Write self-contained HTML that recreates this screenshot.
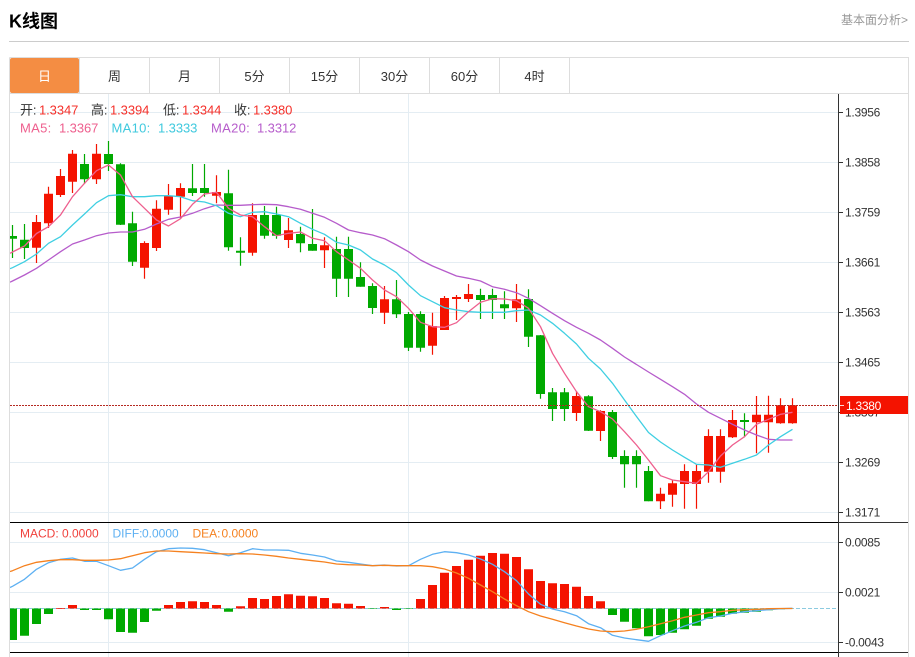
<!DOCTYPE html>
<html lang="zh">
<head>
<meta charset="utf-8">
<title>K线图</title>
<style>
html,body{margin:0;padding:0;background:#fff;width:915px;height:657px;overflow:hidden}
svg{display:block;position:absolute;left:0;top:0}
text{font-family:"Liberation Sans","Noto Sans CJK SC",sans-serif}
.ax{font-size:12px;fill:#333;letter-spacing:-.28px}
.lg{font-size:13px;letter-spacing:-.08px}
.md{font-size:12px}
.tab{font-size:13px;fill:#333;text-anchor:middle}
</style>
</head>
<body>
<svg width="915" height="657" viewBox="0 0 915 657" xmlns="http://www.w3.org/2000/svg">
<defs><clipPath id="c"><rect x="10" y="94" width="828" height="563"/></clipPath></defs>

<!-- header -->
<text x="9" y="27.5" font-size="18" font-weight="700" fill="#000">K线图</text>
<text x="908" y="24" font-size="12" fill="#999" text-anchor="end">基本面分析&gt;</text>
<path d="M9 41.5H909" stroke="#ccc" fill="none"/>

<!-- frame and tabs -->
<path d="M9.5 57.5H908.5V657M9.5 57.5V657M9 93.5H909M79.5 58V93M149.5 58V93M219.5 58V93M289.5 58V93M359.5 58V93M429.5 58V93M499.5 58V93M569.5 58V93" stroke="#ddd" fill="none"/>
<rect x="10" y="58" width="69" height="35" rx="2" fill="#f48d43"/>
<text class="tab" x="44.5" y="81" style="fill:#fff">日</text>
<text class="tab" x="114.5" y="81">周</text>
<text class="tab" x="184.5" y="81">月</text>
<text class="tab" x="254.5" y="81">5分</text>
<text class="tab" x="324.5" y="81">15分</text>
<text class="tab" x="394.5" y="81">30分</text>
<text class="tab" x="464.5" y="81">60分</text>
<text class="tab" x="534.5" y="81">4时</text>

<!-- grid -->
<path d="M10 112.5H838M10 162.5H838M10 212.5H838M10 262.5H838M10 312.5H838M10 362.5H838M10 412.5H838M10 462.5H838M10 512.5H838M10 542.5H838M10 592.5H838M10 642.5H838M108.5 94V657M408.5 94V657" stroke="#e4edf3" fill="none"/>

<g clip-path="url(#c)">
<!-- wicks -->
<path stroke="#f41300" stroke-width="1.2" fill="none" d="M36.5 215V263M48.5 186.7V228M60.5 169V197M72.5 150V193M96.5 144V184M144.5 241.3V278.7M156.5 200.3V251M168.5 184V214.7M180.5 183.3V218.3M216.5 175.3V203.3M252.5 203.3V255.7M288.5 218V248M324.5 237.3V268M384.5 286V324M432.5 312.7V354.7M444.5 296V330M456.5 295V320M468.5 284V302M516.5 284V322M576.5 391V421M600.5 410.3V441M660.5 487.7V509M672.5 480V506.7M684.5 464.3V508.7M696.5 464.3V508.7M708.5 429.3V482.7M720.5 429.3V482.7M732.5 410V438M756.5 396V453.3M768.5 395.7V452.7M780.5 398.3V423.7M792.5 398.3V423.7"/>
<path stroke="#00a900" stroke-width="1.2" fill="none" d="M12.5 225V258M24.5 224V259M84.5 154V184M108.5 141V171M120.5 163.3V225M132.5 211.7V266M192.5 164V196M204.5 164V196.7M228.5 169.7V250.7M240.5 237.3V265.7M264.5 206V238.7M276.5 206.7V238.7M300.5 226.7V252.3M312.5 209V250.7M336.5 236.7V297M348.5 236.7V297M360.5 262.3V286.7M372.5 283.3V314M396.5 280V318M408.5 312V351M420.5 311.3V351.7M480.5 288.7V319M492.5 288.7V319M504.5 291.3V319M528.5 289.3V347M540.5 335V398.7M552.5 388V421M564.5 388V421M588.5 395.3V431M612.5 410V459M624.5 450.3V487.7M636.5 450.3V487.7M648.5 466V501.3M744.5 413.3V437.3"/>
<!-- bodies -->
<path fill="#f41300" d="M32 222H41V247.7H32zM44 193.7H53V223.3H44zM56 176H65V195H56zM68 153.7H77V181.7H68zM92 153.7H101V179.3H92zM140 243H149V267.7H140zM152 208.7H161V248H152zM164 196H173V209.7H164zM176 188H185V196.7H176zM212 192H221V195.7H212zM248 215H257V252.7H248zM284 230.3H293V240H284zM320 245.3H329V250.3H320zM380 299.3H389V312.7H380zM428 326H437V345.7H428zM440 298H449V330H440zM452 297H461V299H452zM464 294H473V299H464zM512 299.3H521V308.3H512zM572 396H581V413H572zM596 411H605V431H596zM656 493.7H665V501.3H656zM668 483.3H677V494.7H668zM680 471H689V484H680zM692 471H701V484H692zM704 436H713V471.7H704zM716 436H725V471.7H716zM728 420H737V437.3H728zM752 414.7H761V422.3H752zM764 414.7H773V422.3H764zM776 405.3H785V423.3H776zM788 405.3H797V423.3H788z"/>
<path fill="#00a900" d="M10 236H17V238.7H10zM20 239.7H29V248H20zM80 164H89V179.3H80zM104 154H113V164H104zM116 164.3H125V224.7H116zM128 223.3H137V261.7H128zM188 188.3H197V193H188zM200 188H209V193H200zM224 193.3H233V247.3H224zM236 250.7H245V252.7H236zM260 215H269V235.7H260zM272 215H281V235.7H272zM296 234H305V243.3H296zM308 244H317V250.7H308zM332 249H341V278.7H332zM344 249H353V278.7H344zM356 277H365V286.7H356zM368 286H377V308H368zM392 299.3H401V314.3H392zM404 314H413V347.7H404zM416 314H425V347.7H416zM476 295H485V300H476zM488 295H497V300H488zM500 304.3H509V308.3H500zM524 299H533V336.7H524zM536 335.3H545V394H536zM548 392.3H557V409H548zM560 392.3H569V409H560zM584 396.3H593V430.7H584zM608 412H617V457H608zM620 456H629V464.3H620zM632 456H641V464.3H632zM644 471H653V501.3H644zM740 420H749V422H740z"/>

<!-- MA lines -->
<path fill="none" stroke="#b65ccb" stroke-width="1.3" stroke-linejoin="round" d="M10 282.2L12.5 281L24.5 275L36.5 268.3L48.5 260L60.5 251.7L72.5 244L84.5 240L96.5 235.7L108.5 233L120.5 232L132.5 232L144.5 229.3L156.5 224L168.5 219.3L180.5 217L192.5 213.3L204.5 208.7L216.5 205L228.5 205.3L240.5 205.3L252.5 204.7L264.5 204.3L276.5 204.7L288.5 206.7L300.5 209.3L312.5 213.3L324.5 217.3L336.5 223.3L348.5 230L360.5 232.7L372.5 235L384.5 238.7L396.5 245L408.5 251.7L420.5 260L432.5 266L444.5 271L456.5 276L468.5 278.3L480.5 281L492.5 286.7L504.5 289.3L516.5 292.7L528.5 298.3L540.5 305.7L552.5 313.3L564.5 320.7L576.5 327.3L588.5 333.3L600.5 340L612.5 348.3L624.5 357L636.5 364.5L648.5 372L660.5 379.3L672.5 386.7L684.5 394.3L696.5 404L708.5 412.3L720.5 418.3L732.5 424.3L744.5 430L756.5 435L768.5 439.3L780.5 440L792.5 440"/>
<path fill="none" stroke="#3fcfe2" stroke-width="1.3" stroke-linejoin="round" d="M10 268.7L12.5 267.7L24.5 261.7L36.5 254L48.5 243.3L60.5 236.7L72.5 225L84.5 214L96.5 202.7L108.5 195.7L120.5 194.7L132.5 196.7L144.5 196.7L156.5 195.7L168.5 195.7L180.5 196.7L192.5 200.7L204.5 202L216.5 205.7L228.5 213.3L240.5 216.7L252.5 212.3L264.5 211.7L276.5 214L288.5 216.7L300.5 223.3L312.5 229.3L324.5 234.3L336.5 242.3L348.5 245L360.5 250L372.5 259L384.5 265L396.5 272.7L408.5 285L420.5 295.7L432.5 301.7L444.5 307.7L456.5 310L468.5 311.7L480.5 312.3L492.5 312.3L504.5 312.3L516.5 310.7L528.5 310L540.5 315L552.5 323.3L564.5 333.3L576.5 344L588.5 358.3L600.5 369L612.5 383.3L624.5 400L636.5 416.5L648.5 432.5L660.5 442L672.5 450L684.5 457.3L696.5 464.3L708.5 465L720.5 467.3L732.5 463.3L744.5 459.3L756.5 455L768.5 445L780.5 436.7L792.5 429.3"/>
<path fill="none" stroke="#ee5f8e" stroke-width="1.3" stroke-linejoin="round" d="M10 253.3L12.5 252L24.5 246L36.5 233.5L48.5 226.7L60.5 215L72.5 196.7L84.5 183.3L96.5 170.7L108.5 165L120.5 175L132.5 196.7L144.5 208.3L156.5 220L168.5 226L180.5 218.7L192.5 204.3L204.5 194L216.5 192.3L228.5 208.3L240.5 215L252.5 216.7L264.5 226.7L276.5 235.7L288.5 233.3L300.5 232L312.5 238.3L324.5 240.7L336.5 251.7L348.5 260L360.5 268.3L372.5 280L384.5 290L396.5 296.7L408.5 308.3L420.5 322.3L432.5 326.7L444.5 327.3L456.5 322.7L468.5 311.7L480.5 302.3L492.5 298.7L504.5 299L516.5 300.7L528.5 308.3L540.5 326.7L552.5 353.3L564.5 373.3L576.5 391.7L588.5 406.7L600.5 411.7L612.5 419L624.5 431.7L636.5 445L648.5 460L660.5 475.7L672.5 480L684.5 481.7L696.5 483.3L708.5 471.7L720.5 456L732.5 445L744.5 436.7L756.5 424.3L768.5 419.3L780.5 414.3L792.5 412.3"/>

<!-- last price line -->
<path d="M10 405.5H838" stroke="#b52a22" stroke-dasharray="2 1" fill="none"/>

<!-- MACD zero line -->
<path d="M10 608.5H838" stroke="#8ccbe0" stroke-dasharray="4 2" fill="none"/>

<!-- MACD histogram -->
<path fill="#f41300" d="M56 608H65V608.8H56zM68 605H77V608.5H68zM164 605H173V608.5H164zM176 602H185V608.5H176zM188 601.3H197V608.5H188zM200 602H209V608.5H200zM212 605H221V608.5H212zM236 606.3H245V608.5H236zM248 598H257V608.5H248zM260 599H269V608.5H260zM272 596H281V608.5H272zM284 594.3H293V608.5H284zM296 595.7H305V608.5H296zM308 596.3H317V608.5H308zM320 598H329V608.5H320zM332 603.3H341V608.5H332zM344 603.7H353V608.5H344zM356 606H365V608.5H356zM380 607H389V608.5H380zM416 599H425V608.5H416zM428 585H437V608.5H428zM440 572.7H449V608.5H440zM452 566H461V608.5H452zM464 559.7H473V608.5H464zM476 555.7H485V608.5H476zM488 553H497V608.5H488zM500 553.7H509V608.5H500zM512 557H521V608.5H512zM524 569.3H533V608.5H524zM536 581H545V608.5H536zM548 583.3H557V608.5H548zM560 584H569V608.5H560zM572 586.7H581V608.5H572zM584 596H593V608.5H584zM596 601.3H605V608.5H596z"/>
<path fill="#00a900" d="M10 608.5H17V640H10zM20 608.5H29V635.7H20zM32 608.5H41V624H32zM44 608.5H53V614H44zM80 608.5H89V610H80zM92 608.5H101V610H92zM104 608.5H113V619.3H104zM116 608.5H125V632H116zM128 608.5H137V632.7H128zM140 608.5H149V622H140zM152 608.5H161V610.7H152zM224 608.5H233V611.7H224zM368 608.5H377V609H368zM392 608.5H401V610H392zM404 608.5H413V609H404zM608 608.5H617V615H608zM620 608.5H629V621.7H620zM632 608.5H641V628.3H632zM644 608.5H653V636.3H644zM656 608.5H665V635H656zM668 608.5H677V632.7H668zM680 608.5H689V629.3H680zM692 608.5H701V625.7H692zM704 608.5H713V618.7H704zM716 608.5H725V616.7H716zM728 608.5H737V613.7H728zM740 608.5H749V612.7H740zM752 608.5H761V611.7H752zM764 608.5H773V610.3H764zM776 608.5H785V609.2H776z"/>

<!-- DIFF / DEA -->
<path fill="none" stroke="#5db0f2" stroke-width="1.3" stroke-linejoin="round" d="M10 587.5L12.5 586.3L24.5 579.3L36.5 569.3L48.5 562.7L60.5 559.3L72.5 558L84.5 561.3L96.5 561.3L108.5 565.7L120.5 570.3L132.5 568L144.5 559.3L156.5 551.7L168.5 548.7L180.5 548L192.5 548.3L204.5 549.7L216.5 552.7L228.5 555.7L240.5 552.7L252.5 548.7L264.5 550L276.5 550L288.5 550.3L300.5 553.3L312.5 555L324.5 557L336.5 561L348.5 562.3L360.5 564L372.5 565.7L384.5 565L396.5 566L408.5 565.7L420.5 559.3L432.5 554.3L444.5 551.7L456.5 552.7L468.5 555L480.5 559L492.5 564.3L504.5 571.7L516.5 580.7L528.5 594L540.5 604.3L552.5 609L564.5 611.7L576.5 615.7L588.5 623.7L600.5 627.7L612.5 635.3L624.5 638L636.5 639.7L648.5 641.3L660.5 635.7L672.5 630.7L684.5 626L696.5 622.3L708.5 617.7L720.5 616L732.5 613.3L744.5 611.7L756.5 610.7L768.5 609.7L780.5 608.7L792.5 608.3"/>
<path fill="none" stroke="#f5811f" stroke-width="1.3" stroke-linejoin="round" d="M10 571.5L12.5 570.7L24.5 565.7L36.5 562.3L48.5 560.7L60.5 559.7L72.5 559.7L84.5 560.3L96.5 560.3L108.5 560L120.5 558.7L132.5 555.7L144.5 552.7L156.5 551L168.5 551L180.5 551.7L192.5 552.3L204.5 553L216.5 553.7L228.5 554L240.5 553.7L252.5 554L264.5 555L276.5 556.3L288.5 558L300.5 559.3L312.5 560.7L324.5 562L336.5 564L348.5 564.7L360.5 565L372.5 565.7L384.5 565.3L396.5 565.7L408.5 565.7L420.5 565.7L432.5 566.7L444.5 569L456.5 573L468.5 578.3L480.5 585L492.5 591.7L504.5 599L516.5 605.7L528.5 611.7L540.5 616L552.5 619.3L564.5 622.7L576.5 626L588.5 629L600.5 631L612.5 631.7L624.5 631L636.5 629.3L648.5 626.7L660.5 623.7L672.5 620.7L684.5 617.3L696.5 615L708.5 612.7L720.5 611.7L732.5 610.3L744.5 609.7L756.5 609.3L768.5 608.7L780.5 608.5L792.5 608.5"/>
</g>

<!-- panel separators and axis -->
<path d="M10 522.5H838M10 652.5H838" stroke="#000" fill="none"/>
<path d="M838 522.5H908M838 652.5H908" stroke="#333" fill="none"/>
<path d="M838.5 94V657" stroke="#333" fill="none"/>
<path d="M839 112.5H843M839 162.5H843M839 212.5H843M839 262.5H843M839 312.5H843M839 362.5H843M839 412.5H843M839 462.5H843M839 512.5H843M839 542.5H843M839 592.5H843M839 642.5H843" stroke="#333" fill="none"/>

<!-- axis labels -->
<text class="ax" x="845" y="116.5">1.3956</text>
<text class="ax" x="845" y="166.5">1.3858</text>
<text class="ax" x="845" y="216.5">1.3759</text>
<text class="ax" x="845" y="266.5">1.3661</text>
<text class="ax" x="845" y="316.5">1.3563</text>
<text class="ax" x="845" y="366.5">1.3465</text>
<text class="ax" x="845" y="416.5">1.3367</text>
<text class="ax" x="845" y="466.5">1.3269</text>
<text class="ax" x="845" y="516.5">1.3171</text>
<text class="ax" x="845" y="546.5">0.0085</text>
<text class="ax" x="845" y="596.5">0.0021</text>
<text class="ax" x="845" y="646.5">-0.0043</text>

<!-- last price tag -->
<rect x="840" y="396" width="68" height="18" fill="#f41300"/>
<path d="M840 405.5H844" stroke="#ffd9d4" fill="none"/>
<text class="ax" x="846" y="410" style="fill:#fff">1.3380</text>

<!-- legends -->
<text class="lg" x="20" y="114.5" fill="#333">开:</text><text class="lg" x="39" y="114.5" fill="#f5302a">1.3347</text>
<text class="lg" x="91" y="114.5" fill="#333">高:</text><text class="lg" x="110" y="114.5" fill="#f5302a">1.3394</text>
<text class="lg" x="163" y="114.5" fill="#333">低:</text><text class="lg" x="182" y="114.5" fill="#f5302a">1.3344</text>
<text class="lg" x="234" y="114.5" fill="#333">收:</text><text class="lg" x="253" y="114.5" fill="#f5302a">1.3380</text>

<text class="lg" x="20" y="132.5" fill="#ee5f8e" style="letter-spacing:.3px">MA5:</text><text class="lg" x="59" y="132.5" fill="#ee5f8e">1.3367</text>
<text class="lg" x="111.5" y="132.5" fill="#3fc9de" style="letter-spacing:.3px">MA10:</text><text class="lg" x="158" y="132.5" fill="#3fc9de">1.3333</text>
<text class="lg" x="211" y="132.5" fill="#b65ccb" style="letter-spacing:.3px">MA20:</text><text class="lg" x="257" y="132.5" fill="#b65ccb">1.3312</text>

<text class="md" x="20" y="537.5" fill="#f0413c">MACD:</text><text class="md" x="62" y="537.5" fill="#f0413c">0.0000</text>
<text class="md" x="112.5" y="537.5" fill="#5db0f2">DIFF:</text><text class="md" x="142" y="537.5" fill="#5db0f2">0.0000</text>
<text class="md" x="192.5" y="537.5" fill="#f5811f">DEA:</text><text class="md" x="221.5" y="537.5" fill="#f5811f">0.0000</text>
</svg>
</body>
</html>
